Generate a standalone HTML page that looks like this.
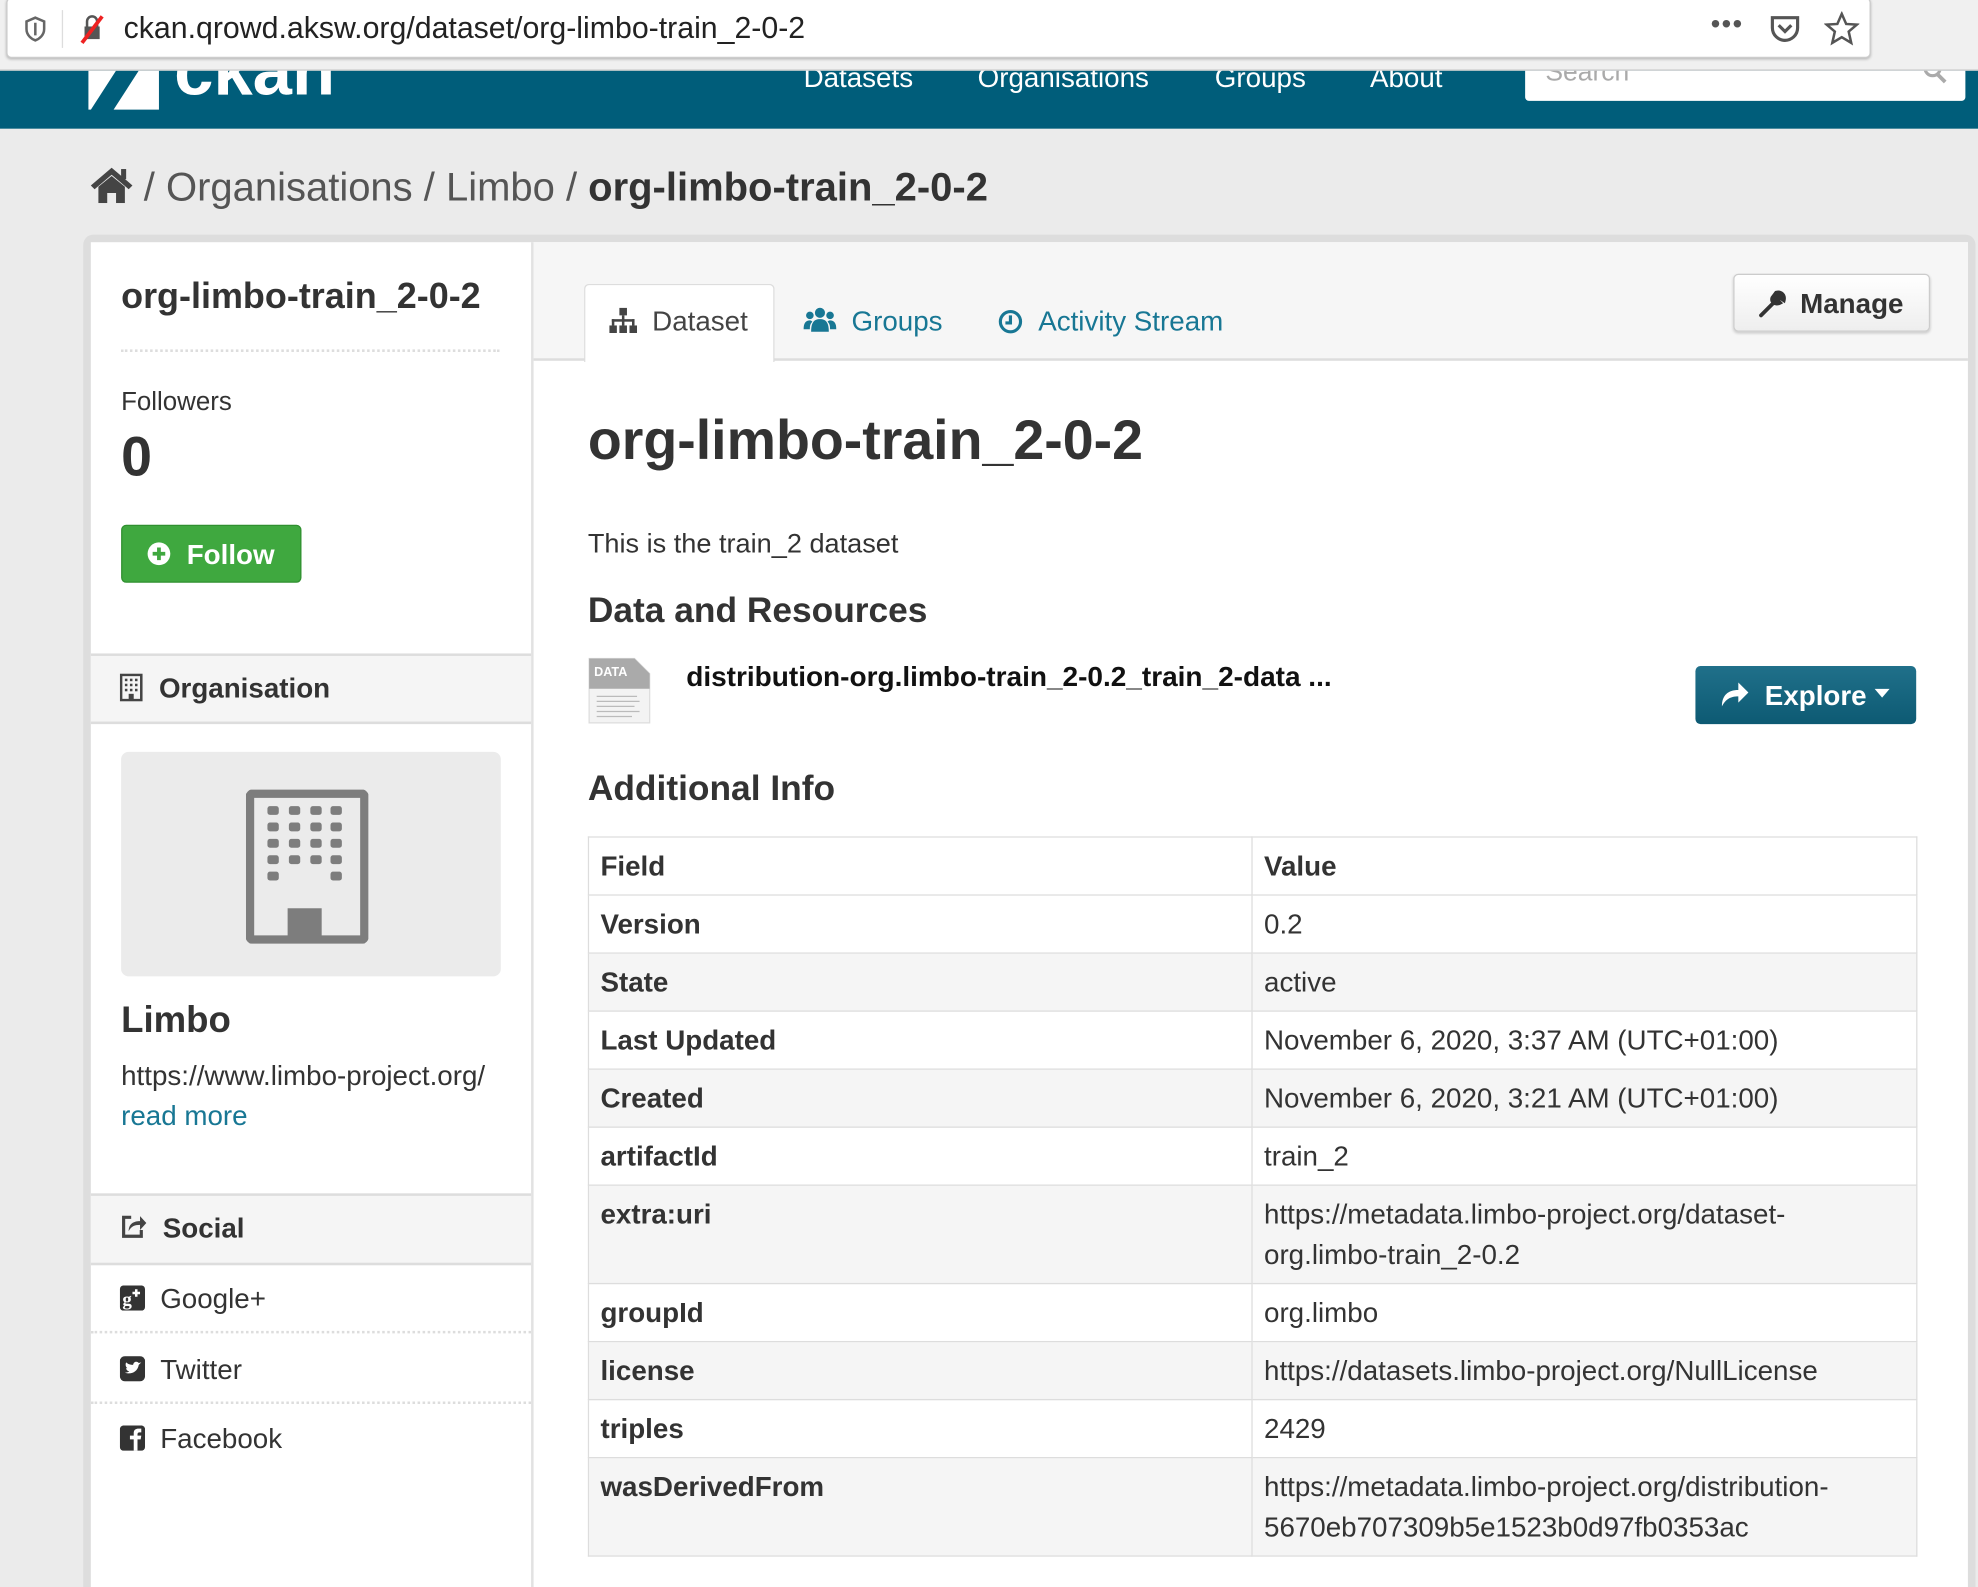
<!DOCTYPE html>
<html><head><meta charset="utf-8"><style>
html,body{margin:0;padding:0;width:1978px;height:1587px;overflow:hidden;background:#ececec;}
#w{position:absolute;left:0;top:0;width:1568px;height:1258px;transform:scale(1.26148);transform-origin:0 0;font-family:"Liberation Sans",sans-serif;color:#333;background:#ebebeb;overflow:hidden;}
.a{position:absolute;white-space:nowrap;}
.b{font-weight:bold;}
.link{color:#187794;}
table{border-collapse:collapse;}
td{padding:0 9px;border:1px solid #ddd;}
tr.t td{vertical-align:top;padding-top:7px;padding-bottom:6px;line-height:32px;}
</style></head><body><div id="w">
<!-- navbar -->
<div class="a" style="left:0;top:56px;width:1568px;height:46px;background:#005d7a"></div>
<svg class="a" style="left:70px;top:56px" width="58" height="31" viewBox="0 0 58 31"><path d="M0 0 H22 L2 31 H0 Z M20 31 L40 0 H56 V31 Z" fill="#fff"/></svg>
<div class="a b" style="left:138px;top:24px;font-size:56px;color:#fff;height:62px;line-height:56px;overflow:hidden"><span style="position:relative;top:4px">ckan</span></div>
<div class="a" style="left:637px;top:49px;font-size:22px;color:#fff">Datasets</div>
<div class="a" style="left:775px;top:49px;font-size:22px;color:#fff">Organisations</div>
<div class="a" style="left:963px;top:49px;font-size:22px;color:#fff">Groups</div>
<div class="a" style="left:1086px;top:49px;font-size:22px;color:#fff">About</div>
<div class="a" style="left:1209px;top:56px;width:349px;height:24px;background:#fff;border-radius:0 0 3px 3px"></div>
<div class="a" style="left:1225px;top:46px;font-size:21px;color:#aaa">Search</div>
<svg class="a" style="left:1524px;top:50px" width="22" height="20" viewBox="0 0 22 20"><circle cx="8" cy="4" r="6" fill="none" stroke="#aaa" stroke-width="2.5"/><path d="M12 9 L18 15" stroke="#aaa" stroke-width="3"/></svg>
<!-- browser bar -->
<div class="a" style="left:0;top:0;width:1568px;height:55px;background:#f0f0f0;border-bottom:1px solid #ccc"></div>
<div class="a" style="left:5px;top:-2px;width:1476px;height:46px;background:#fff;border:1px solid #ccc;border-radius:4px;box-shadow:0 1px 2px #bbb"></div>
<svg class="a" style="left:18px;top:12px" width="20" height="22" viewBox="0 0 20 22"><path d="M10 2 L17 5 V11 C17 16 13 19 10 20 C7 19 3 16 3 11 V5 Z" fill="none" stroke="#666" stroke-width="2"/><path d="M10 6 V16" stroke="#666" stroke-width="2"/></svg>
<div class="a" style="left:49px;top:8px;width:1px;height:30px;background:#ddd"></div>
<svg class="a" style="left:62px;top:10px" width="22" height="26" viewBox="0 0 22 26"><rect x="5" y="11" width="12" height="10" fill="#555"/><path d="M7 11 V7 a4 4 0 0 1 8 0 V11" fill="none" stroke="#555" stroke-width="2"/><path d="M3 24 L19 3" stroke="#e22" stroke-width="3"/></svg>
<div class="a" style="left:98px;top:9px;font-size:24px;color:#222">ckan.qrowd.aksw.org/dataset/org-limbo-train_2-0-2</div>
<div class="a" style="left:1356px;top:6px;font-size:22px;color:#555;letter-spacing:1px">•••</div>
<svg class="a" style="left:1402px;top:10px" width="26" height="26" viewBox="0 0 26 26"><path d="M3 4 H23 V12 C23 18 18 22 13 22 C8 22 3 18 3 12 Z" fill="none" stroke="#555" stroke-width="2.5"/><path d="M8 10 L13 15 L18 10" fill="none" stroke="#555" stroke-width="2.5"/></svg>
<svg class="a" style="left:1446px;top:9px" width="28" height="28" viewBox="0 0 28 28"><path d="M14 2 L17.5 10 L26 10.5 L19.5 16 L21.5 25 L14 20.5 L6.5 25 L8.5 16 L2 10.5 L10.5 10 Z" fill="none" stroke="#555" stroke-width="2"/></svg>
<!-- breadcrumb -->
<svg class="a" style="left:71px;top:131px" width="35" height="30" viewBox="0 0 35 30"><path d="M17.5 2 L34 16 L31 19 L17.5 7.5 L4 19 L1 16 Z" fill="#444"/><path d="M7 17 L17.5 8.5 L28 17 V30 H21 V22 H14 V30 H7 Z" fill="#444"/><rect x="25" y="3" width="4" height="8" fill="#444"/></svg>
<div class="a" style="left:114px;top:130px;font-size:31.7px;color:#555">/ Organisations / Limbo / <b style="color:#333">org-limbo-train_2-0-2</b></div>
<!-- container -->
<div class="a" style="left:66px;top:186px;width:1500px;height:1100px;background:#ddd;border-radius:8px"></div>
<div class="a" style="left:72px;top:192px;width:1488px;height:1100px;background:#fff"></div>
<div class="a" style="left:421px;top:192px;width:2px;height:1100px;background:#e2e2e2"></div>
<div class="a" style="left:423px;top:192px;width:1137px;height:92px;background:#f6f6f6;border-bottom:2px solid #ddd"></div>
<!-- sidebar -->
<div class="a b" style="left:96px;top:219px;font-size:28.5px;color:#333">org-limbo-train_2-0-2</div>
<div class="a" style="left:96px;top:277px;width:300px;border-top:2px dotted #ddd"></div>
<div class="a" style="left:96px;top:307px;font-size:20.5px">Followers</div>
<div class="a b" style="left:96px;top:338px;font-size:44px">0</div>
<div class="a" style="left:96px;top:416px;width:143px;height:46px;background:#3fa83f;border:1px solid #2f8f2f;border-radius:4px;box-sizing:border-box"></div>
<svg class="a" style="left:116px;top:429px" width="20" height="20" viewBox="0 0 20 20"><circle cx="10" cy="10" r="9" fill="#fff"/><path d="M10 5 V15 M5 10 H15" stroke="#3fa83f" stroke-width="3"/></svg>
<div class="a b" style="left:148px;top:427px;font-size:22px;color:#fff">Follow</div>
<div class="a" style="left:72px;top:518px;width:349px;height:52px;background:#f5f5f5;border-top:2px solid #ddd;border-bottom:2px solid #ddd"></div>
<svg class="a" style="left:95px;top:534px" width="19" height="22" viewBox="0 0 19 22"><rect x="1" y="1" width="16" height="20" fill="none" stroke="#444" stroke-width="2"/><g fill="#444"><rect x="4" y="4" width="2" height="2"/><rect x="8" y="4" width="2" height="2"/><rect x="12" y="4" width="2" height="2"/><rect x="4" y="8" width="2" height="2"/><rect x="8" y="8" width="2" height="2"/><rect x="12" y="8" width="2" height="2"/><rect x="4" y="12" width="2" height="2"/><rect x="8" y="12" width="2" height="2"/><rect x="12" y="12" width="2" height="2"/><rect x="7" y="16" width="4" height="5"/></g></svg>
<div class="a b" style="left:126px;top:533px;font-size:22px">Organisation</div>
<div class="a" style="left:96px;top:596px;width:301px;height:178px;background:#ebebeb;border-radius:6px"></div>
<svg class="a" style="left:195px;top:626px" width="97" height="122" viewBox="0 0 97 122"><rect x="3" y="3" width="91" height="116" rx="3" fill="none" stroke="#7d7d7d" stroke-width="7"/><g fill="#7d7d7d"><rect x="17" y="13" width="9" height="7" rx="2"/><rect x="34" y="13" width="9" height="7" rx="2"/><rect x="51" y="13" width="9" height="7" rx="2"/><rect x="67" y="13" width="9" height="7" rx="2"/><rect x="17" y="26" width="9" height="7" rx="2"/><rect x="34" y="26" width="9" height="7" rx="2"/><rect x="51" y="26" width="9" height="7" rx="2"/><rect x="67" y="26" width="9" height="7" rx="2"/><rect x="17" y="39" width="9" height="7" rx="2"/><rect x="34" y="39" width="9" height="7" rx="2"/><rect x="51" y="39" width="9" height="7" rx="2"/><rect x="67" y="39" width="9" height="7" rx="2"/><rect x="17" y="52" width="9" height="7" rx="2"/><rect x="34" y="52" width="9" height="7" rx="2"/><rect x="51" y="52" width="9" height="7" rx="2"/><rect x="67" y="52" width="9" height="7" rx="2"/><rect x="17" y="65" width="9" height="7" rx="2"/><rect x="67" y="65" width="9" height="7" rx="2"/><rect x="33" y="94" width="27" height="25"/></g></svg>
<div class="a b" style="left:96px;top:793px;font-size:29px">Limbo</div>
<div class="a" style="left:96px;top:840px;font-size:22px">https://www.limbo-project.org/</div>
<div class="a link" style="left:96px;top:872px;font-size:22px">read more</div>
<div class="a" style="left:72px;top:946px;width:349px;height:53px;background:#f5f5f5;border-top:2px solid #ddd;border-bottom:2px solid #ddd"></div>
<svg class="a" style="left:95px;top:962px" width="22" height="20" viewBox="0 0 22 20"><path d="M9 3 H3 V18 H17 V13" fill="none" stroke="#444" stroke-width="2.5"/><path d="M7 14 C7 8 11 6 16 6 V2 L21 7.5 L16 13 V9 C12 9 9 10 7 14 Z" fill="#444"/></svg>
<div class="a b" style="left:129px;top:961px;font-size:22px">Social</div>
<svg class="a" style="left:95px;top:1019px" width="20" height="20" viewBox="0 0 20 20"><rect width="20" height="20" rx="3" fill="#333"/><text x="2" y="16" font-size="15" font-weight="bold" fill="#fff" font-family="Liberation Serif">g</text><path d="M13 3 V9 M10 6 H16" stroke="#fff" stroke-width="2"/></svg>
<div class="a" style="left:127px;top:1017px;font-size:22px">Google+</div>
<div class="a" style="left:72px;top:1055px;width:349px;border-top:2px dotted #ddd"></div>
<svg class="a" style="left:95px;top:1075px" width="20" height="20" viewBox="0 0 20 20"><rect width="20" height="20" rx="4" fill="#333"/><path d="M4 13 C8 15 14 13 15 7 L17 5 L15 5.5 C14 4 11 4 10.5 7 C8 7 6 6 5 5 C4 7 5 9 6 9.5 L5 9.5 C5 11 6.5 12 7.5 12 C6.5 13 5 13 4 13 Z" fill="#fff"/></svg>
<div class="a" style="left:127px;top:1073px;font-size:22px">Twitter</div>
<div class="a" style="left:72px;top:1111px;width:349px;border-top:2px dotted #ddd"></div>
<svg class="a" style="left:95px;top:1130px" width="20" height="20" viewBox="0 0 20 20"><rect width="20" height="20" rx="3" fill="#333"/><path d="M11 20 V11 H8 V8 H11 V6 C11 3.5 12.5 2.5 15 2.5 H17 V5.5 H15.5 C14.5 5.5 14 6 14 7 V8 H17 L16.5 11 H14 V20 Z" fill="#fff"/></svg>
<div class="a" style="left:127px;top:1128px;font-size:22px">Facebook</div>
<!-- tabs -->
<div class="a" style="left:463px;top:225px;width:149px;height:61px;background:#fff;border:1px solid #ddd;border-bottom:none;border-radius:4px 4px 0 0"></div>
<svg class="a" style="left:483px;top:244px" width="22" height="20" viewBox="0 0 22 20"><g fill="#444"><rect x="8" y="0" width="6" height="6"/><rect x="0" y="14" width="6" height="6"/><rect x="8" y="14" width="6" height="6"/><rect x="16" y="14" width="6" height="6"/><rect x="10" y="6" width="2" height="8"/><rect x="2" y="9" width="18" height="2"/><rect x="2" y="9" width="2" height="5"/><rect x="18" y="9" width="2" height="5"/></g></svg>
<div class="a" style="left:517px;top:242px;font-size:22px;color:#444">Dataset</div>
<svg class="a" style="left:637px;top:243px" width="26" height="22" viewBox="0 0 26 22"><g fill="#187794"><circle cx="13" cy="5" r="4"/><circle cx="5" cy="7" r="3"/><circle cx="21" cy="7" r="3"/><path d="M6 20 C6 13 8 10 13 10 C18 10 20 13 20 20 Z"/><path d="M0 18 C0 13 2 11 5 11 C6 11 7 12 7 12 C5 14 5 16 5 18 Z"/><path d="M26 18 C26 13 24 11 21 11 C20 11 19 12 19 12 C21 14 21 16 21 18 Z"/></g></svg>
<div class="a link" style="left:675px;top:242px;font-size:22px">Groups</div>
<svg class="a" style="left:791px;top:245px" width="20" height="20" viewBox="0 0 20 20"><circle cx="10" cy="10" r="8" fill="none" stroke="#187794" stroke-width="2.5"/><path d="M10 5 V11 H6" fill="none" stroke="#187794" stroke-width="2.5"/></svg>
<div class="a link" style="left:823px;top:242px;font-size:22px">Activity Stream</div>
<div class="a" style="left:1374px;top:217px;width:156px;height:46px;background:linear-gradient(#fff,#eee);border:1px solid #ccc;border-radius:4px;box-sizing:border-box;box-shadow:0 1px 2px #ccc"></div>
<svg class="a" style="left:1394px;top:230px" width="22" height="22" viewBox="0 0 22 22"><path d="M2 20 L12 10 M14 2 C18 1 21 4 20 8 L17 6 L15 8 L17 10 C13 12 10 9 11 6 Z" fill="#333" stroke="#333" stroke-width="3" stroke-linecap="round"/></svg>
<div class="a b" style="left:1427px;top:228px;font-size:22px">Manage</div>
<!-- main -->
<div class="a b" style="left:466px;top:325px;font-size:44px">org-limbo-train_2-0-2</div>
<div class="a" style="left:466px;top:419px;font-size:21.5px">This is the train_2 dataset</div>
<div class="a b" style="left:466px;top:468px;font-size:28px">Data and Resources</div>
<svg class="a" style="left:465px;top:520px" width="52" height="55" viewBox="0 0 52 55"><path d="M2 2 H38 L50 14 V53 H2 Z" fill="#f3f3f3" stroke="#ddd"/><path d="M2 2 H38 L50 14 V26 H2 Z" fill="#aaa"/><text x="6" y="16" font-size="10" font-weight="bold" fill="#fff" font-family="Liberation Sans">DATA</text><g stroke="#bbb"><path d="M8 32 H40 M8 36 H42 M8 40 H38 M8 44 H42 M8 48 H36"/></g></svg>
<div class="a b" style="left:544px;top:524px;font-size:22.2px;color:#111">distribution-org.limbo-train_2-0.2_train_2-data ...</div>
<div class="a" style="left:1344px;top:528px;width:175px;height:46px;background:linear-gradient(#20708a,#0d5a73);border-radius:4px"></div>
<svg class="a" style="left:1363px;top:539px" width="24" height="22" viewBox="0 0 24 22"><path d="M2 21 C2 12 7 8 15 8 V2 L23 10 L15 18 V13 C9 13 5 15 2 21 Z" fill="#fff"/></svg>
<div class="a b" style="left:1399px;top:539px;font-size:22px;color:#fff">Explore</div>
<svg class="a" style="left:1486px;top:546px" width="12" height="8" viewBox="0 0 12 8"><path d="M0 0 H12 L6 7 Z" fill="#fff"/></svg>
<div class="a b" style="left:466px;top:609px;font-size:28px">Additional Info</div>
<table class="a" style="left:466px;top:663px;width:1054px;font-size:22px;border:1px solid #ddd">
<colgroup><col style="width:526px"><col></colgroup>
<tbody>
<tr style="height:46px"><td class="b">Field</td><td class="b">Value</td></tr>
<tr style="height:46px"><td class="b">Version</td><td>0.2</td></tr>
<tr style="height:46px;background:#f5f5f5"><td class="b">State</td><td>active</td></tr>
<tr style="height:46px"><td class="b">Last Updated</td><td>November 6, 2020, 3:37 AM (UTC+01:00)</td></tr>
<tr style="height:46px;background:#f5f5f5"><td class="b">Created</td><td>November 6, 2020, 3:21 AM (UTC+01:00)</td></tr>
<tr style="height:46px"><td class="b">artifactId</td><td>train_2</td></tr>
<tr class="t" style="height:77px;background:#f5f5f5"><td class="b">extra:uri</td><td>https://metadata.limbo-project.org/dataset-<br>org.limbo-train_2-0.2</td></tr>
<tr style="height:46px"><td class="b">groupId</td><td>org.limbo</td></tr>
<tr style="height:46px;background:#f5f5f5"><td class="b">license</td><td>https://datasets.limbo-project.org/NullLicense</td></tr>
<tr style="height:46px"><td class="b">triples</td><td>2429</td></tr>
<tr class="t" style="height:77px;background:#f5f5f5"><td class="b">wasDerivedFrom</td><td>https://metadata.limbo-project.org/distribution-<br>5670eb707309b5e1523b0d97fb0353ac</td></tr>
</tbody></table>
</div></body></html>
